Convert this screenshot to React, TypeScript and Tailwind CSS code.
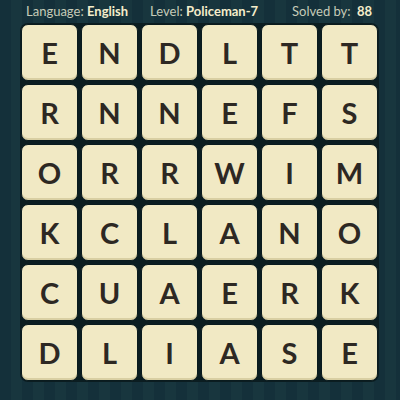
import React from "react";

const rows = ["ENDLTT", "RNNEFS", "ORRWIM", "KCLANO", "CUAERK", "DLIASE"];

const Tile: React.FC<{ letter: string }> = ({ letter }) => (
  <div className="w-[57px] h-[57px] rounded-[7px] bg-[#f1e9c4] border border-[#0a1b1e] shadow-[inset_0_-2px_0_#d9cfa3] flex items-center justify-center text-[29px] font-bold text-[#2d2823] leading-none">
    {letter}
  </div>
);

export default function App() {
  return (
    <div
      className="w-[400px] h-[400px] overflow-hidden bg-[repeating-linear-gradient(90deg,#14303a_0px,#14303a_11px,#18363e_11px,#18363e_22px)]"
      style={{ fontFamily: "Lato, 'Open Sans', sans-serif" }}
    >
      <header className="h-[22px] flex items-center text-[13px] pl-[26px] pr-[28px] pt-[2px]">
        <span className="text-[#c6cbb8]">
          Language: <b className="text-[#f4edcb] font-bold">English</b>
        </span>
        <span className="ml-[22px] text-[#c6cbb8]">
          Level: <b className="text-[#f4edcb] font-bold">Policeman-7</b>
        </span>
        <span className="ml-auto text-[#c6cbb8]">
          Solved by: <b className="text-[#f4edcb] font-bold ml-[3px]">88</b>
        </span>
      </header>
      <div className="ml-[20px] mt-[1px] w-fit p-[1px] rounded-[8px] bg-[#0b1d21]">
        <div className="grid grid-cols-6 gap-[3px]">
          {rows.flatMap((r, i) =>
            r.split("").map((c, j) => <Tile key={`${i}-${j}`} letter={c} />)
          )}
        </div>
      </div>
    </div>
  );
}
